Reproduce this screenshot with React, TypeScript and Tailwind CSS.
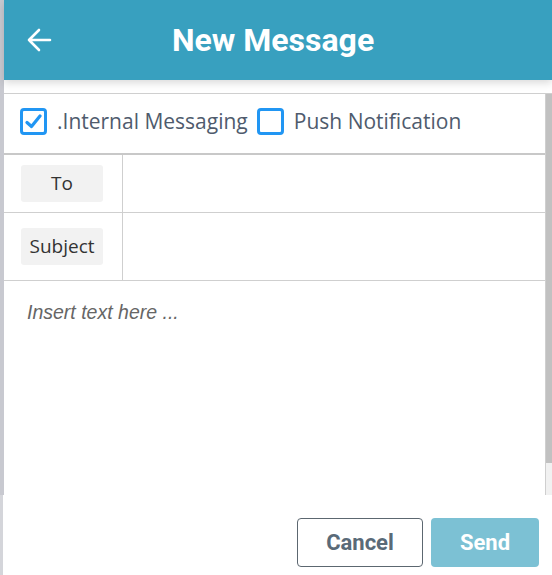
import React, { useState } from 'react';

const Checkbox = ({ checked, label, onToggle }: { checked: boolean; label: string; onToggle: () => void }) => (
  <button onClick={onToggle} className="flex items-center gap-[10px]">
    <span className="flex h-[27px] w-[27px] items-center justify-center rounded-[4px] border-[3px] border-[#2196f3] bg-white">
      {checked && (
        <svg width="17" height="15" viewBox="0 0 17 15">
          <path d="M2 8.5 L6.5 12.5 L15 2" fill="none" stroke="#2196f3" strokeWidth="3.2" strokeLinecap="round" strokeLinejoin="round" />
        </svg>
      )}
    </span>
    <span className="text-[21px] text-[#4f5b6d] leading-none">{label}</span>
  </button>
);

const FieldRow = ({ label, height, border }: { label: string; height: string; border: string }) => (
  <div className={`flex ${height} ${border} border-[#cfcfcf]`}>
    <div className="flex w-[119px] shrink-0 items-center justify-center border-r border-[#cfcfcf] pr-[2px]">
      <span className="flex h-[37px] w-[82px] items-center justify-center rounded-[3px] bg-[#f2f2f2] text-[19px] text-[#333]">
        {label}
      </span>
    </div>
    <input className="flex-1 px-3 text-[18px] outline-none" />
  </div>
);

export default function App() {
  const [internal, setInternal] = useState(true);
  const [push, setPush] = useState(false);

  return (
    <div className="relative flex h-[575px] w-[552px] bg-white" style={{ fontFamily: '"Open Sans", sans-serif' }}>
      {/* left edge strip */}
      <div className="flex w-[4px] shrink-0 flex-col">
        <div className="h-[495px] bg-[#c8c9d0]" />
        <div className="w-[3px] flex-1 bg-[#d4d5da]" />
      </div>

      <div className="flex flex-1 flex-col">
        <header className="relative z-10 flex h-[80px] shrink-0 items-center bg-[#38a0bf] shadow-[0_3px_8px_rgba(0,0,0,0.15)]">
          <button className="ml-[22px] flex h-[26px] w-[26px] items-center justify-center">
            <svg width="26" height="26" viewBox="0 0 26 26">
              <path d="M24 13 H3 M13 3 L3 13 L13 23" fill="none" stroke="white" strokeWidth="2.6" strokeLinecap="round" strokeLinejoin="round" />
            </svg>
          </button>
          <h1
            className="absolute left-[168px] text-[32px] font-bold text-white"
            style={{ fontFamily: 'Roboto, sans-serif' }}
          >
            New Message
          </h1>
        </header>

        <div className="mt-[13px] flex h-[402px] border-t border-[#cfcfcf]">
          <div className="flex flex-1 flex-col border-r border-[#cfcfcf]">
            <div className="flex h-[61px] items-center gap-[9px] border-b-2 border-[#c8c8c8] pb-[4px] pl-[16px]">
              <Checkbox checked={internal} label=".Internal Messaging" onToggle={() => setInternal(!internal)} />
              <Checkbox checked={push} label="Push Notification" onToggle={() => setPush(!push)} />
            </div>
            <FieldRow label="To" height="h-[58px]" border="border-b" />
            <FieldRow label="Subject" height="h-[68px]" border="border-b" />
            <textarea
              placeholder="Insert text here ..."
              className="flex-1 resize-none px-[23px] pt-[17px] text-[19.5px] italic text-[#333] outline-none placeholder:text-[#666]"
              style={{ fontFamily: '"Liberation Sans", Arial, sans-serif' }}
            />
          </div>
          <div className="flex w-[6px] shrink-0 flex-col">
            <div className="h-[369px] bg-[#c1c1c1]" />
            <div className="flex-1 bg-[#f1f1f1]" />
          </div>
        </div>

        <div className="flex flex-1 items-start justify-end gap-[8px] pr-[13px] pt-[23px]" style={{ fontFamily: 'Roboto, sans-serif' }}>
          <button className="h-[49px] w-[126px] rounded-[4px] border border-[#5c6770] text-[22px] font-bold text-[#5a6a78]">
            Cancel
          </button>
          <button className="h-[49px] w-[108px] rounded-[4px] bg-[#7cc1d4] text-[22px] font-bold text-white">
            Send
          </button>
        </div>
      </div>
    </div>
  );
}
